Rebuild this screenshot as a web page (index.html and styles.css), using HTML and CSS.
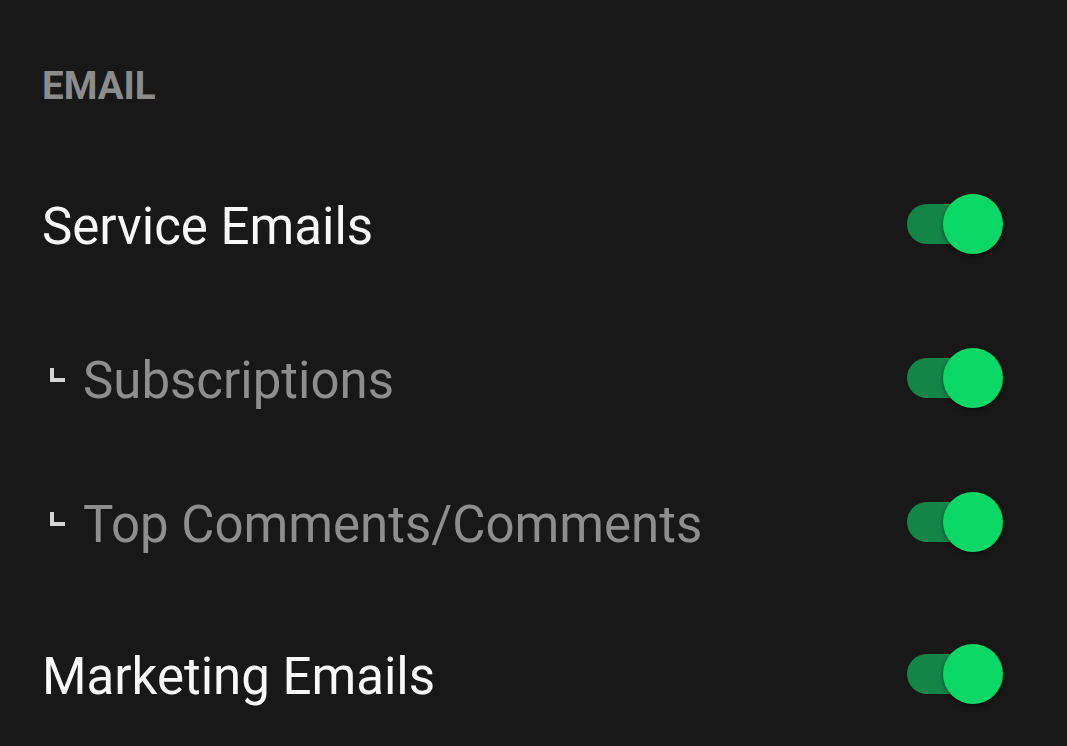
FILE: index.html
```html
<!DOCTYPE html>
<html>
<head>
<meta charset="utf-8">
<title>Email settings</title>
<link rel="stylesheet" href="styles.css">
</head>
<body>
<div class="settings">
	<div class="section-title">EMAIL</div>

	<div class="row row-main">
		<div class="label">Service Emails</div>
		<div class="switch on"><span class="track"></span><span class="thumb"></span></div>
	</div>

	<div class="row row-sub">
		<div class="label"><span class="corner"></span>Subscriptions</div>
		<div class="switch on"><span class="track"></span><span class="thumb"></span></div>
	</div>

	<div class="row row-sub">
		<div class="label"><span class="corner"></span>Top Comments/Comments</div>
		<div class="switch on"><span class="track"></span><span class="thumb"></span></div>
	</div>

	<div class="row row-main">
		<div class="label">Marketing Emails</div>
		<div class="switch on"><span class="track"></span><span class="thumb"></span></div>
	</div>
</div>
</body>
</html>
```

FILE: styles.css
```css
*{
	margin: 0;
	padding: 0;
	box-sizing: border-box;
}
html,body{
	background-color: #181818;
	height: 100%;
	overflow: hidden;
}
body{
	font-family: Roboto, "Noto Sans", sans-serif;
	color: #f8f8f8;
}
.settings{
	padding: 0 64px 0 42px;
}
.section-title{
	height: 144px;
	padding-top: 67px;
	font-size: 38.5px;
	font-weight: bold;
	line-height: 1;
	color: #8c8c8c;
}
.row{
	display: flex;
	align-items: center;
	justify-content: space-between;
	height: 144px;
}
.row-main{
	margin: 8px 0 10px;
}
.label{
	display: flex;
	align-items: center;
	padding-top: 4px;
	font-size: 51px;
	line-height: 1;
}
.row-sub .label{
	color: #8e8e8e;
	padding-left: 8px;
}
.corner{
	width: 15px;
	height: 14px;
	border-left: 4px solid #d6d6d6;
	border-bottom: 4px solid #d6d6d6;
	margin: -10px 18px 0 0;
}
.switch{
	position: relative;
	width: 96px;
	height: 60px;
}
.track{
	position: absolute;
	left: 0;
	top: 10px;
	width: 86px;
	height: 40px;
	border-radius: 20px;
	background-color: #138547;
}
.thumb{
	position: absolute;
	right: 0;
	top: 0;
	width: 60px;
	height: 60px;
	border-radius: 50%;
	background-color: #0bd766;
	box-shadow: 0 2px 4px rgba(0,0,0,0.45);
}
```
